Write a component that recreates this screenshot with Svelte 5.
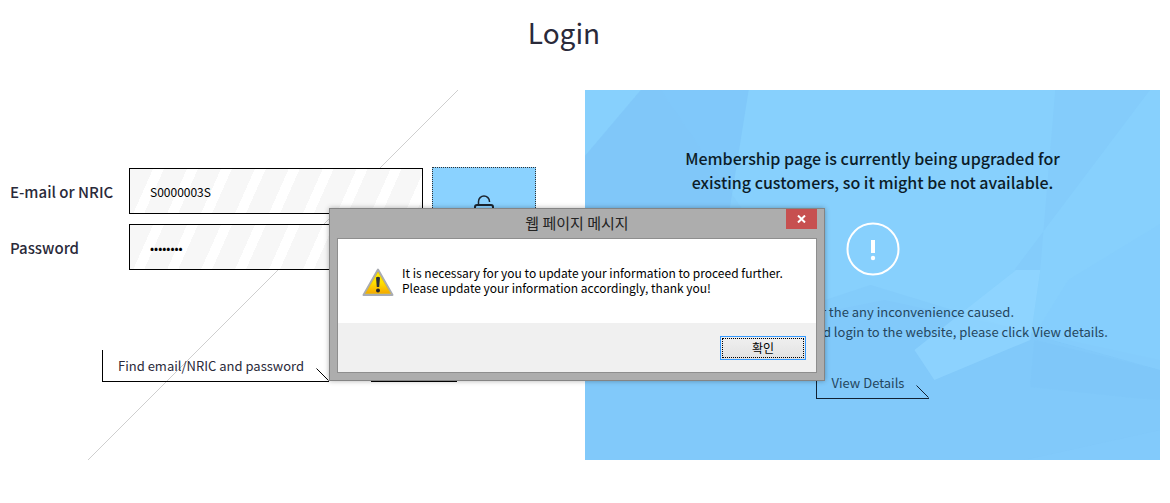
<script lang="ts">
	let userId = $state('S0000003S');
	let password = $state('password');
	let showMessage = $state(true);

	function closeMessage() {
		showMessage = false;
	}

	function formSubmit(e: SubmitEvent) {
		e.preventDefault();
		showMessage = true;
	}
</script>

<main class="page">
	<h1>Login</h1>

	<div class="columns">
		<section class="login">
			<svg class="slash" viewBox="0 0 370 370" aria-hidden="true">
				<path d="M370 0 L0 370" stroke="#cfcfcf" stroke-width="1" />
			</svg>

			<form onsubmit={formSubmit}>
				<div class="fields">
					<div class="field">
						<label for="user-id">E-mail or NRIC</label>
						<input id="user-id" type="text" bind:value={userId} />
					</div>
					<div class="field">
						<label for="user-pw">Password</label>
						<input id="user-pw" type="password" bind:value={password} />
					</div>
				</div>
				<button type="submit" class="submit" aria-label="Login">
					<svg width="22" height="26" viewBox="0 0 22 26" fill="none" stroke="#1b2530" stroke-width="2">
						<path d="M5.500 9V6.500a5.500 5.500 0 0 1 11 0V7" stroke-width="1.500" />
						<rect x="2" y="10" width="18" height="14" rx="2" />
						<path d="M11 14v5" />
					</svg>
				</button>
			</form>

			<div class="links">
				<a class="tag" href="#find">Find email/NRIC and password
					<svg width="13" height="13" viewBox="0 0 13 13"><path d="M0.500 0.500 L12.500 12.500" stroke="#000" /></svg>
				</a>
				<a class="tag small" href="#join">Join
					<svg width="13" height="13" viewBox="0 0 13 13"><path d="M0.500 0.500 L12.500 12.500" stroke="#000" /></svg>
				</a>
			</div>
		</section>

		<section class="notice">
			<svg class="facets" viewBox="0 0 576 370" preserveAspectRatio="none" aria-hidden="true">
				<polygon points="56,0 164,0 144,125 0,125 0,66" fill="#80c8fa" />
				<polygon points="76,0 56,0 0,66 0,240 240,240" fill="#80c8fa" opacity="0.3" />
				<polygon points="471,0 566,0 430,180 456,180" fill="#84ccfb" />
				<polygon points="0,270 300,210 576,270 576,370 0,370" fill="#80c8f9" opacity="0.7" />
				<polygon points="286,195 450,245 576,280 576,340 440,370 0,370 0,290" fill="#80c8f9" opacity="0.5" />
				<polygon points="432,180 456,180 446,250 350,290 330,260" fill="#92d5ff" opacity="0.7" />
				<polygon points="576,134 484,190 450,245 576,280" fill="#84cdfc" opacity="0.7" />
				<polygon points="450,250 446,297 550,308 576,310 576,280" fill="#7dc5f8" opacity="0.4" />
			</svg>
			<p class="lead">Membership page is currently being upgraded for<br />existing customers, so it might be not available.</p>
			<svg class="mark" width="54" height="54" viewBox="0 0 54 54">
				<circle cx="27" cy="27" r="25.500" fill="none" stroke="#fff" stroke-width="2" />
				<path d="M27 18v13" stroke="#fff" stroke-width="4" />
				<circle cx="27" cy="36" r="2.200" fill="#fff" />
			</svg>
			<p class="info">We are sorry for the any inconvenience caused.<br />For more details on the updated login to the website, please click View details.</p>
			<a class="tag details" href="#details">View Details
				<svg width="13" height="13" viewBox="0 0 13 13"><path d="M0.500 0.500 L12.500 12.500" stroke="#123" /></svg>
			</a>
		</section>
	</div>

	{#if showMessage}
		<div class="overlay">
			<div class="dialog" role="alertdialog" aria-labelledby="msg-title" aria-describedby="msg-text">
				<header>
					<h2 id="msg-title">웹 페이지 메시지</h2>
					<button type="button" class="close" aria-label="닫기" onclick={closeMessage}>
						<svg width="9" height="8" viewBox="0 0 9 8"><path d="M1 0.500 L8 7.500 M8 0.500 L1 7.500" stroke="#fff" stroke-width="2" /></svg>
					</button>
				</header>
				<div class="content">
					<div class="message">
						<svg width="32" height="29" viewBox="0 0 32 29">
							<defs>
								<linearGradient id="warn" x1="0" y1="0" x2="0" y2="1">
									<stop offset="0" stop-color="#fff200" />
									<stop offset="0.500" stop-color="#ffe000" />
									<stop offset="1" stop-color="#f5a800" />
								</linearGradient>
							</defs>
							<path d="M16 1.500 L30.500 27 H1.500 Z" fill="#c9ccd0" stroke="#a9acb2" stroke-width="2" stroke-linejoin="round" />
							<path d="M16 4 L28.500 25.500 H3.500 Z" fill="url(#warn)" stroke="#e0b400" stroke-width="0.600" />
							<path d="M14 9.500 Q16 8 18 9.500 L17.200 19 H14.800 Z" fill="#2b2f3a" />
							<circle cx="16" cy="22.500" r="2" fill="#20232b" />
						</svg>
						<p id="msg-text">It is necessary for you to update your information to proceed further.<br />Please update your information accordingly, thank you!</p>
					</div>
					<footer>
						<button type="button" class="ok" onclick={closeMessage}><span>확인</span></button>
					</footer>
				</div>
			</div>
		</div>
	{/if}
</main>

<style>
	:global(body) {
		margin: 0;
		background: #fff;
	}

	.page {
		position: relative;
		padding: 10px 10px 43px;
		font-family: "Noto Sans CJK KR", "Noto Sans", sans-serif;
		color: #2a2a3a;
	}

	h1 {
		margin: 0 50px 36px 0;
		padding-left: 8px;
		font-size: 28px;
		font-weight: 400;
		line-height: 44px;
		text-align: center;
	}

	.columns {
		display: grid;
		grid-template-columns: 1fr 1fr;
	}

	.login {
		position: relative;
		min-height: 370px;
		box-sizing: border-box;
		padding-top: 77px;
	}

	.slash {
		position: absolute;
		top: 0;
		left: 78px;
		width: 370px;
		height: 370px;
	}

	form {
		position: relative;
		display: flex;
		gap: 9px;
		padding-right: 49px;
	}

	.fields {
		flex: 1;
		display: flex;
		flex-direction: column;
		gap: 10px;
		padding-top: 1px;
	}

	.field {
		display: flex;
		align-items: center;
	}

	label {
		width: 119px;
		font-size: 15px;
		font-weight: 500;
	}

	input {
		flex: 1;
		min-width: 0;
		height: 46px;
		box-sizing: border-box;
		padding: 0 20px;
		border: 1px solid #000;
		border-radius: 0;
		outline: 0;
		background: repeating-linear-gradient(114deg, #f7f7f7 0 21px, #fff 21px 31px);
		font-family: inherit;
		font-size: 12px;
		color: #000;
	}

	.submit {
		width: 104px;
		padding: 27px 0 0;
		display: flex;
		justify-content: center;
		align-items: flex-start;
		border: 1px dotted #333;
		background: #8ad2ff;
		cursor: pointer;
	}

	.links {
		position: relative;
		display: flex;
		gap: 42px;
		margin: 80px 0 0 92px;
	}

	.tag {
		display: flex;
		justify-content: space-between;
		align-items: flex-end;
		height: 31px;
		padding-left: 15px;
		border: solid #000;
		border-width: 0 0 1px 1px;
		font-size: 13px;
		line-height: 31px;
		color: #2a2a3a;
		text-decoration: none;
		gap: 12px;
	}

	.tag svg {
		flex: none;
	}

	.small {
		width: 70px;
	}

	.notice {
		position: relative;
		display: flex;
		flex-direction: column;
		align-items: center;
		background: #87d0fd;
		text-align: center;
	}

	.facets {
		position: absolute;
		inset: 0;
		width: 100%;
		height: 100%;
	}

	.lead,
	.mark,
	.info,
	.details {
		position: relative;
	}

	.lead {
		margin: 56px 0 28px;
		font-size: 16px;
		font-weight: 500;
		line-height: 24px;
		color: #0c1c28;
	}

	.info {
		margin: 26px 0 25px;
		font-size: 13px;
		line-height: 20px;
		color: #24465e;
	}

	.details {
		color: #24465e;
		border-color: #123;
	}

	.overlay {
		position: absolute;
		inset: 208px 16px auto 0;
		display: flex;
		justify-content: center;
	}

	.dialog {
		width: 496px;
		box-sizing: border-box;
		padding: 0 7px 7px;
		border: 1px solid #848484;
		background: #adadad;
		box-shadow: 0 0 5px rgba(0, 0, 0, 0.3);
	}

	header {
		position: relative;
		height: 29px;
	}

	h2 {
		margin: 0;
		font-size: 15px;
		font-weight: 400;
		line-height: 28px;
		text-align: center;
		color: #222;
	}

	.close {
		position: absolute;
		top: 0;
		right: 0;
		width: 31px;
		height: 20px;
		padding: 0;
		display: flex;
		justify-content: center;
		align-items: center;
		border: 0;
		background: #c75050;
	}

	.content {
		border: 1px solid #8e8e8e;
		background: #fff;
	}

	.message {
		display: flex;
		gap: 8px;
		padding: 26px 24px;
		min-height: 32px;
	}

	.message svg {
		flex: none;
		margin-top: 3px;
	}

	.message p {
		margin: 0;
		font-size: 12px;
		line-height: 15px;
		color: #000;
	}

	footer {
		display: flex;
		justify-content: flex-end;
		padding: 13px 10px 12px;
		background: #f0f0f0;
	}

	.ok {
		width: 86px;
		height: 24px;
		padding: 1px;
		border: 1px solid #3399ff;
		background: linear-gradient(#f0f0f0, #e2e2e2);
		font-family: inherit;
		font-size: 12px;
		color: #000;
	}

	.ok span {
		display: block;
		border: 1px dotted #000;
		line-height: 18px;
	}
</style>
